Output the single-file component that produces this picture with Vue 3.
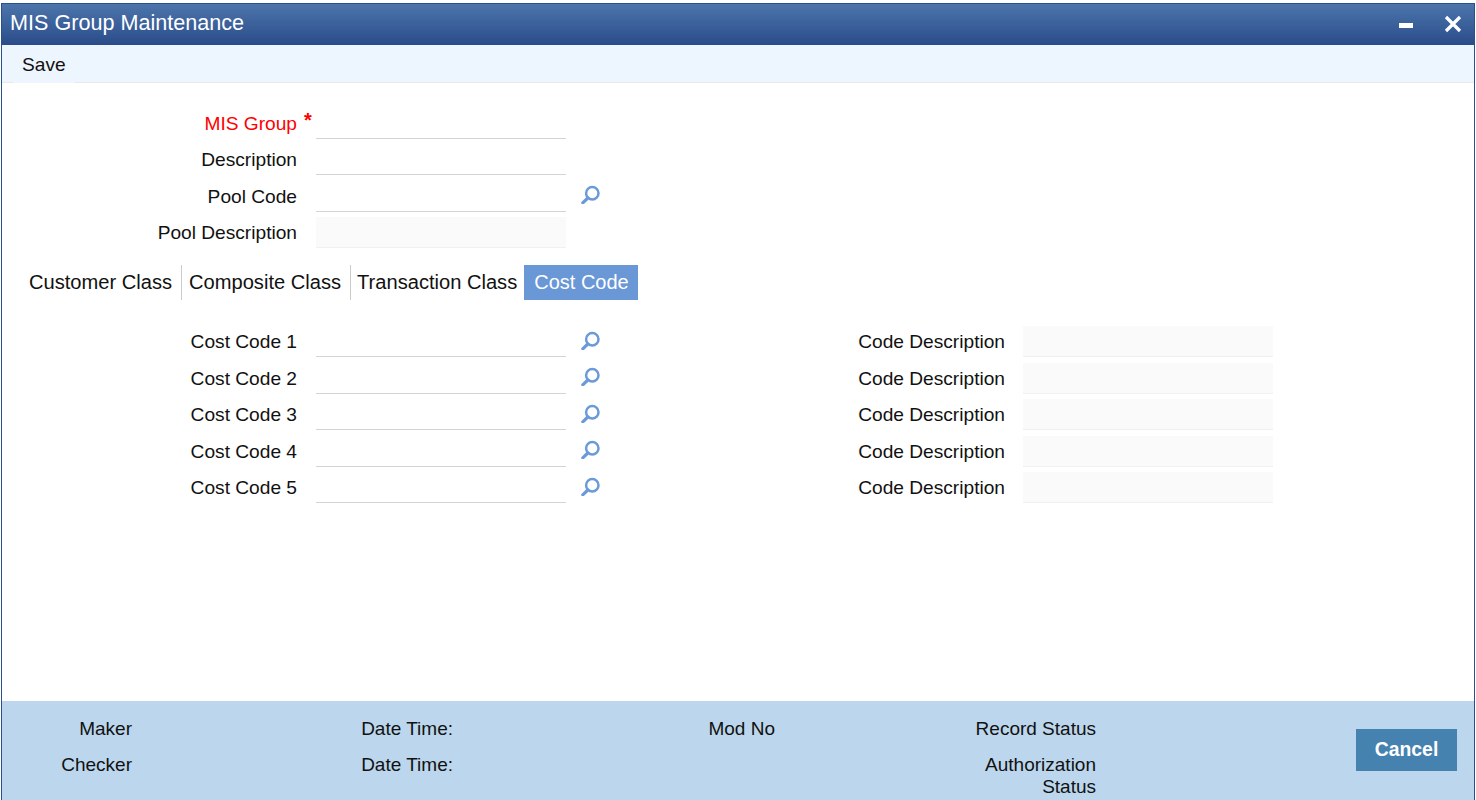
<script setup>
const costRows = [1, 2, 3, 4, 5]
const tabs = ['Customer Class', 'Composite Class', 'Transaction Class', 'Cost Code']
</script>

<template>
  <div class="page">
    <div class="window">
      <header class="title-bar">
        <h1>MIS Group Maintenance</h1>
        <div class="win-buttons">
          <svg class="win-min" width="14" height="5" viewBox="0 0 14 5"><rect width="14" height="5" fill="#fff" /></svg>
          <svg class="win-close" width="20" height="20" viewBox="0 0 20 20"><path d="M3 3l14 14M17 3L3 17" stroke="#fff" stroke-width="3.2" fill="none" /></svg>
        </div>
      </header>
      <nav class="toolbar"><span class="save">Save</span></nav>

      <main class="content">
        <section class="head">
          <div class="row required">
            <label>MIS Group</label><span class="star">*</span>
            <div class="field"></div>
          </div>
          <div class="row">
            <label>Description</label><span class="star"></span>
            <div class="field"></div>
          </div>
          <div class="row">
            <label>Pool Code</label><span class="star"></span>
            <div class="field"></div>
            <svg class="lens" width="20" height="20" viewBox="0 0 20 20"><circle cx="12.3" cy="9.3" r="6.2" fill="none" stroke="#6a9ad8" stroke-width="2.5" /><path d="M7.8 14L2.8 18.8" stroke="#6a9ad8" stroke-width="3.2" stroke-linecap="round" /></svg>
          </div>
          <div class="row">
            <label>Pool Description</label><span class="star"></span>
            <div class="field readonly"></div>
          </div>
        </section>

        <ul class="tabs">
          <li v-for="(tab, i) in tabs" :key="tab" :class="{ active: i === 3, split: i < 2 }">{{ tab }}</li>
        </ul>

        <section class="cost-grid">
          <template v-for="n in costRows" :key="n">
            <div class="row">
              <label>Cost Code {{ n }}</label><span class="star"></span>
              <div class="field"></div>
              <svg class="lens" width="20" height="20" viewBox="0 0 20 20"><circle cx="12.3" cy="9.3" r="6.2" fill="none" stroke="#6a9ad8" stroke-width="2.5" /><path d="M7.8 14L2.8 18.8" stroke="#6a9ad8" stroke-width="3.2" stroke-linecap="round" /></svg>
            </div>
            <div class="row right">
              <label>Code Description</label>
              <div class="field readonly"></div>
            </div>
          </template>
        </section>
      </main>

      <footer class="footer">
        <div class="audit">
          <span>Maker</span><span>Date Time:</span><span>Mod No</span><span>Record Status</span>
          <span>Checker</span><span>Date Time:</span><span></span><span class="auth">Authorization Status</span>
        </div>
        <button class="cancel">Cancel</button>
      </footer>
    </div>
  </div>
</template>

<style scoped>
.page {
  height: 800px;
  box-sizing: border-box;
  padding: 3px 1px 0;
  overflow: hidden;
  background: #fff;
}

.window {
  height: 100%;
  box-sizing: border-box;
  display: flex;
  flex-direction: column;
  background: #fff;
  border: 1px solid #2a4f8f;
  border-bottom: none;
  font-family: "Liberation Sans", Arial, sans-serif;
  font-size: 19.15px;
  color: #111;
}

.title-bar {
  height: 41px;
  flex: none;
  display: flex;
  align-items: center;
  justify-content: space-between;
  padding: 0 11px 0 8px;
  background: linear-gradient(#4c75ab, #2a4c8a);
}

.title-bar h1 {
  margin: 0;
  padding-bottom: 4px;
  font-size: 21.6px;
  font-weight: normal;
  color: #fff;
}

.win-buttons {
  display: flex;
  align-items: center;
  gap: 30px;
}

.win-min {
  margin-top: 2px;
}

.win-close {
  margin-bottom: 1px;
}

.toolbar {
  height: 38px;
  flex: none;
  box-sizing: border-box;
  display: flex;
  padding-left: 11px;
  background: #edf5fe;
  border-bottom: 1px solid #e8e8e8;
}

.save {
  height: 38px;
  box-sizing: border-box;
  padding: 9px 9px 0;
  background: #edf5fe;
}

.content {
  flex: 1;
  min-height: 0;
}

.head {
  padding-top: 19px;
}

.row {
  display: flex;
  align-items: flex-end;
  height: 36.5px;
}

.row label {
  width: 295px;
  box-sizing: border-box;
  text-align: right;
  padding-bottom: 4px;
}

.required label,
.star {
  color: #f00;
}

.star {
  width: 19px;
  flex: none;
  box-sizing: border-box;
  padding: 0 0 7px 7px;
  font-size: 20px;
  font-weight: bold;
}

.field {
  width: 250px;
  height: 31px;
  box-sizing: border-box;
  border-bottom: 1px solid #d4d4d4;
}

.field.readonly {
  background: #fafafa;
  border-bottom-color: #f0f0f0;
}

.lens {
  margin: 0 0 7.5px 14px;
}

.tabs {
  display: flex;
  list-style: none;
  margin: 17px 0 0;
  padding: 0 0 0 20px;
  height: 35px;
  font-size: 20.13px;
}

.tabs li {
  padding: 0 7px 0 6px;
  line-height: 35px;
}

.tabs li:first-child,
.tabs li:nth-child(2) {
  padding-left: 7px;
}

.tabs li.split {
  padding-right: 9px;
  border-right: 1px solid #ccc;
}

.tabs li.active {
  padding: 0 9px 0 10px;
  font-size: 20px;
  background: #6a97d6;
  color: #fff;
}

.cost-grid {
  display: grid;
  grid-template-columns: 772px 1fr;
  margin-top: 20.5px;
}

.row.right label {
  width: 231px;
  margin-right: 18px;
}

.footer {
  height: 99px;
  flex: none;
  display: flex;
  justify-content: space-between;
  background: #bcd7ed;
  padding: 0 17px 0 0;
  font-size: 19px;
}

.audit {
  display: grid;
  grid-template-columns: 130px 321px 322px 321px;
  grid-auto-rows: 35.5px;
  padding-top: 17px;
  text-align: right;
  line-height: 22px;
}

.auth {
  width: 130px;
  justify-self: end;
}

.cancel {
  width: 101px;
  height: 42px;
  margin-top: 28px;
  padding: 0 0 2px;
  border: none;
  background: #4682b0;
  color: #fff;
  font: bold 19.4px "Liberation Sans", Arial, sans-serif;
}
</style>
